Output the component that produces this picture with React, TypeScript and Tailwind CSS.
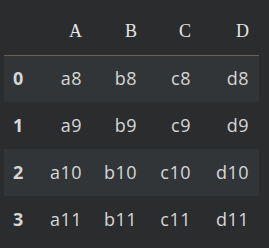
const columns = ["A", "B", "C", "D"];

const rows = [
    { index: 0, cells: ["a8", "b8", "c8", "d8"] },
    { index: 1, cells: ["a9", "b9", "c9", "d9"] },
    { index: 2, cells: ["a10", "b10", "c10", "d10"] },
    { index: 3, cells: ["a11", "b11", "c11", "d11"] },
];

// column widths in px: index, A, B, C, D
const widths = ["w-[32px]", "w-[56px]", "w-[55px]", "w-[54px]", "w-[58px]"];

export default function App() {
    return (
        <div className="w-[269px] h-[248px] bg-[#2a2c2d] pl-[4px] pt-[8px] overflow-hidden">
            <table className="border-collapse table-fixed w-[255px]">
                <thead>
                    <tr className="h-[47px] border-b border-[#6b5f4f]">
                        <th className={widths[0]}></th>
                        {columns.map((c, i) => (
                            <th
                                key={c}
                                className={`${widths[i + 1]} pr-[10px] text-right align-middle font-normal text-[18px] text-[#e6e6e6] font-['Liberation_Serif',serif]`}
                            >
                                {c}
                            </th>
                        ))}
                    </tr>
                </thead>
                <tbody className="font-['Open_Sans',sans-serif] text-[18px] text-[#d6d6d6]">
                    {rows.map((r) => (
                        <tr key={r.index} className={`h-[47px] ${r.index % 2 === 0 ? "bg-[#323537]" : ""}`}>
                            <th className="pl-[9px] text-left font-bold">{r.index}</th>
                            {r.cells.map((v) => (
                                <td key={v} className="pr-[10px] text-right tracking-[0.5px]">
                                    {v}
                                </td>
                            ))}
                        </tr>
                    ))}
                </tbody>
            </table>
        </div>
    );
}
